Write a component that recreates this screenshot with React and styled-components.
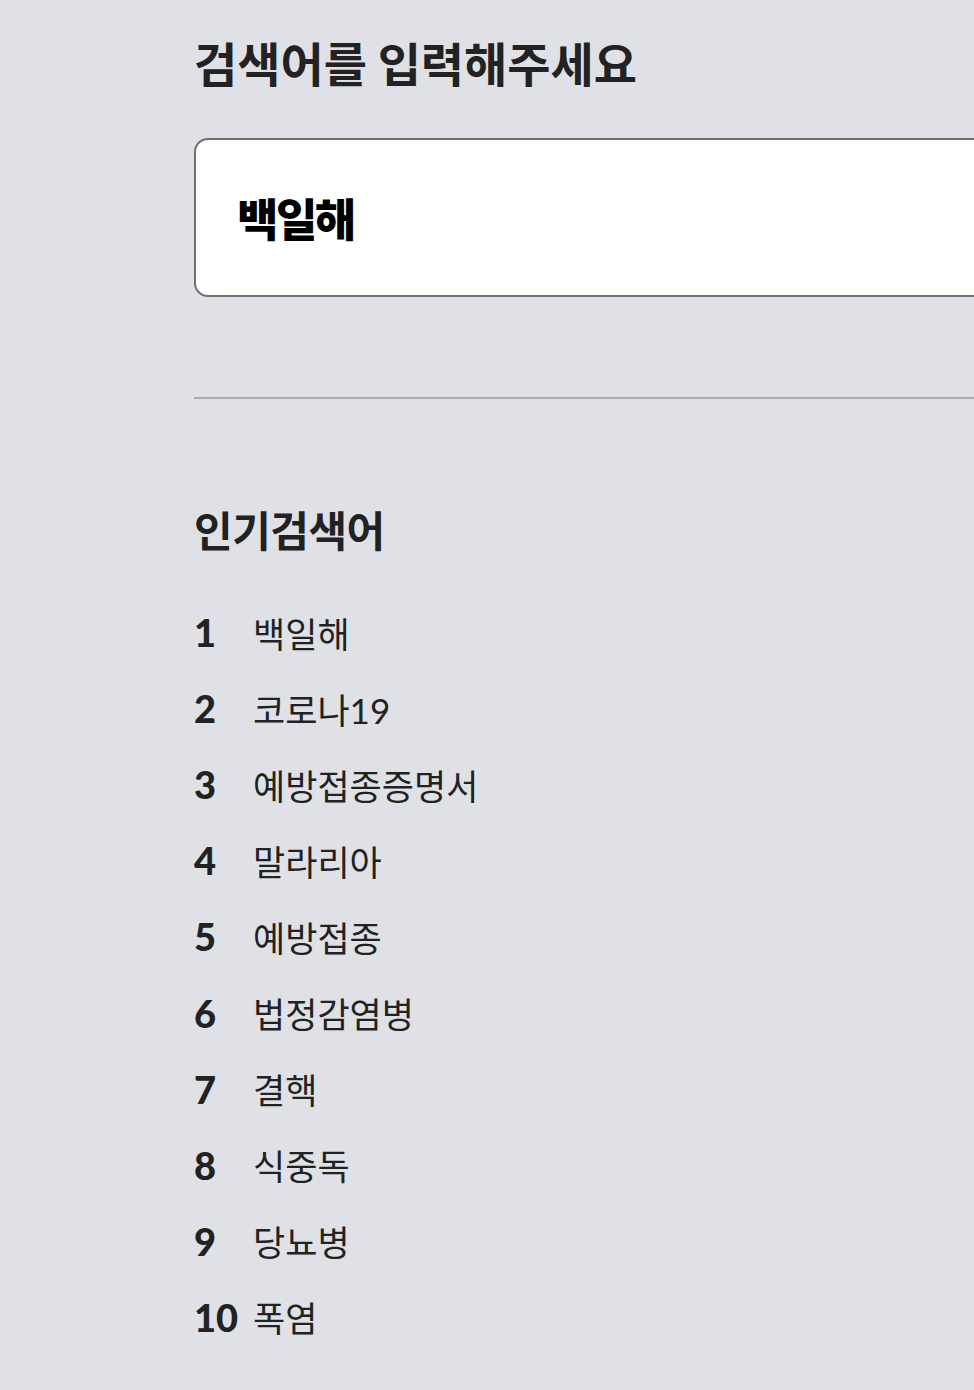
import styled, { createGlobalStyle } from 'styled-components'

const keywords = [
  '백일해',
  '코로나19',
  '예방접종증명서',
  '말라리아',
  '예방접종',
  '법정감염병',
  '결핵',
  '식중독',
  '당뇨병',
  '폭염',
]

function App() {
  return (
    <>
      <GlobalStyle />
      <Page>
        <Title>검색어를 입력해주세요</Title>
        <SearchBox>
          <SearchInput defaultValue="백일해" readOnly />
        </SearchBox>
        <Divider />
        <SectionTitle>인기검색어</SectionTitle>
        <RankList>
          {keywords.map((word, i) => (
            <RankItem key={word}>
              <RankNum>{i + 1}</RankNum>
              <RankWord>{word}</RankWord>
            </RankItem>
          ))}
        </RankList>
      </Page>
    </>
  )
}

const GlobalStyle = createGlobalStyle`
  html, body {
    margin: 0;
    padding: 0;
    background: #dfe1e6;
    overflow: hidden;
  }
  body {
    font-family: 'Lato', 'Noto Sans CJK KR', sans-serif;
    color: #222;
  }
`

const Page = styled.div`
  min-height: 1390px;
  padding: 27px 0 0 194px;
  box-sizing: border-box;
  overflow: hidden;
`

const Title = styled.h1`
  margin: 0;
  font-family: 'Noto Sans CJK KR', sans-serif;
  font-size: 47px;
  font-weight: 700;
  line-height: 70px;
  letter-spacing: 0;
  color: #222;
`

const SearchBox = styled.div`
  margin-top: 41px;
  width: 900px;
  height: 159px;
  box-sizing: border-box;
  background: #fff;
  border: 2px solid #707070;
  border-radius: 14px;
  display: flex;
  align-items: center;
  padding-left: 41px;
`

const SearchInput = styled.input`
  border: none;
  outline: none;
  background: transparent;
  font-family: 'Noto Sans CJK KR', sans-serif;
  font-size: 45px;
  font-weight: 900;
  letter-spacing: -2.5px;
  color: #000;
  padding: 0;
  width: 100%;
`

const Divider = styled.hr`
  margin: 100px 0 0;
  width: 900px;
  border: none;
  height: 2px;
  background: #ababab;
`

const SectionTitle = styled.h2`
  margin: 100px 0 0;
  font-family: 'Noto Sans CJK KR', sans-serif;
  font-size: 42px;
  font-weight: 700;
  line-height: 60px;
  letter-spacing: -0.5px;
  color: #222;
`

const RankList = styled.ol`
  list-style: none;
  margin: 35px 0 0;
  padding: 0;
  display: flex;
  flex-direction: column;
`

const RankItem = styled.li`
  display: flex;
  align-items: center;
  height: 76.1px;
`

const RankNum = styled.span`
  width: 59px;
  font-family: 'Lato', sans-serif;
  font-weight: 900;
  font-size: 38px;
  color: #222;
`

const RankWord = styled.span`
  font-family: 'Lato', 'Noto Sans CJK KR', sans-serif;
  font-weight: 400;
  font-size: 35px;
  letter-spacing: 0;
  color: #222;
`

export default App
